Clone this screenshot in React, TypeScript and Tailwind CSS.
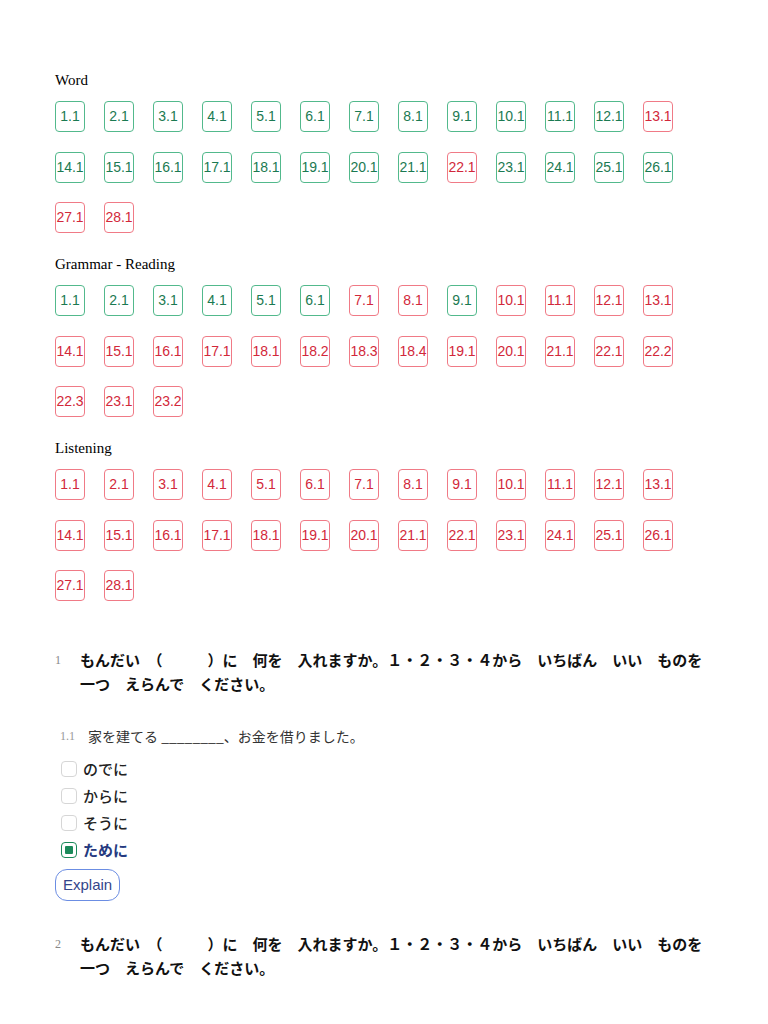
import React from "react";

type Item = { label: string; ok: boolean };

const mk = (labels: string[], green: string[]): Item[] =>
  labels.map((l) => ({ label: l, ok: green.includes(l) }));

const seq = (n: number) => Array.from({ length: n }, (_, i) => `${i + 1}.1`);

const wordLabels = seq(28);
const wordGreen = wordLabels.filter((l) => !["13.1", "22.1", "27.1", "28.1"].includes(l));

const grammarLabels = [
  "1.1", "2.1", "3.1", "4.1", "5.1", "6.1", "7.1", "8.1", "9.1", "10.1", "11.1", "12.1", "13.1",
  "14.1", "15.1", "16.1", "17.1", "18.1", "18.2", "18.3", "18.4", "19.1", "20.1", "21.1", "22.1", "22.2",
  "22.3", "23.1", "23.2",
];
const grammarGreen = ["1.1", "2.1", "3.1", "4.1", "5.1", "6.1", "9.1"];

const sections = [
  { title: "Word", items: mk(wordLabels, wordGreen) },
  { title: "Grammar - Reading", items: mk(grammarLabels, grammarGreen) },
  { title: "Listening", items: mk(seq(28), []) },
];

const serif = { fontFamily: '"Liberation Serif", "Times New Roman", serif' };
const sans = { fontFamily: '"Liberation Sans", Arial, sans-serif' };
const jp = { fontFamily: '"Noto Sans CJK JP", "Noto Sans", sans-serif' };

function Section({ title, items }: { title: string; items: Item[] }) {
  return (
    <div className="mt-[21px] first:mt-0">
      <div className="text-[15px] leading-[20px] text-black" style={serif}>
        {title}
      </div>
      <div className="mt-[11px] flex flex-wrap gap-x-[19px] gap-y-[19.5px] w-[660px]">
        {items.map((it) => (
          <div
            key={it.label}
            className={
              "flex h-[31px] w-[30px] items-center justify-center rounded-[4px] border text-[14px] " +
              (it.ok
                ? "border-[#52b98c] text-[#1b7a52]"
                : "border-[#f07a86] text-[#d2283a]")
            }
            style={sans}
          >
            {it.label}
          </div>
        ))}
      </div>
    </div>
  );
}

const QTEXT =
  "もんだい　（　　　）に　何を　入れますか。１・２・３・４から　いちばん　いい　ものを　一つ　えらんで　ください。";

function QuestionHeader({ n }: { n: string }) {
  return (
    <div className="flex">
      <div className="w-[25px] shrink-0 pt-[2px] text-[12px] leading-[20px] text-[#888]" style={serif}>
        {n}
      </div>
      <div className="w-[640px] text-[15px] font-bold leading-[24px] text-[#111]" style={jp}>
        {QTEXT}
      </div>
    </div>
  );
}

function Option({ text, selected }: { text: string; selected?: boolean }) {
  return (
    <div className="flex h-[27px] items-center">
      <div className="ml-[6px] mr-[6px]">
        {selected ? (
          <div className="flex h-[16px] w-[16px] items-center justify-center rounded-[4px] border-[1.5px] border-[#1b8a5a] bg-white">
            <div className="h-[8px] w-[8px] rounded-[1px] bg-[#1b8a5a]" />
          </div>
        ) : (
          <div className="h-[16px] w-[16px] rounded-[4px] border border-[#d6d6d6] bg-white" />
        )}
      </div>
      <span
        className={
          "text-[15px] leading-[20px] " +
          (selected ? "font-bold text-[#253a80]" : "font-medium text-[#222]")
        }
        style={jp}
      >
        {text}
      </span>
    </div>
  );
}

export default function App() {
  return (
    <div className="min-h-[1024px] w-[768px] bg-white pl-[55px] pt-[70px]">
      {sections.map((s) => (
        <Section key={s.title} title={s.title} items={s.items} />
      ))}

      <div className="mt-[47px]">
        <QuestionHeader n="1" />
      </div>

      <div className="mt-[30px] flex items-center pl-[5px]">
        <div className="w-[28px] shrink-0 text-[12px] leading-[20px] text-[#999]" style={serif}>
          1.1
        </div>
        <div className="text-[14px] leading-[20px] text-[#333]" style={jp}>
          家を建てる ________、お金を借りました。
        </div>
      </div>

      <div className="mt-[9px] flex flex-col">
        <Option text="のでに" />
        <Option text="からに" />
        <Option text="そうに" />
        <Option text="ために" selected />
      </div>

      <div className="mt-[6px]">
        <button
          className="flex h-[32px] items-center rounded-[12px] border border-[#6b8de3] px-[7px] text-[15px] text-[#34458a]"
          style={sans}
        >
          Explain
        </button>
      </div>

      <div className="mt-[31px]">
        <QuestionHeader n="2" />
      </div>
    </div>
  );
}
